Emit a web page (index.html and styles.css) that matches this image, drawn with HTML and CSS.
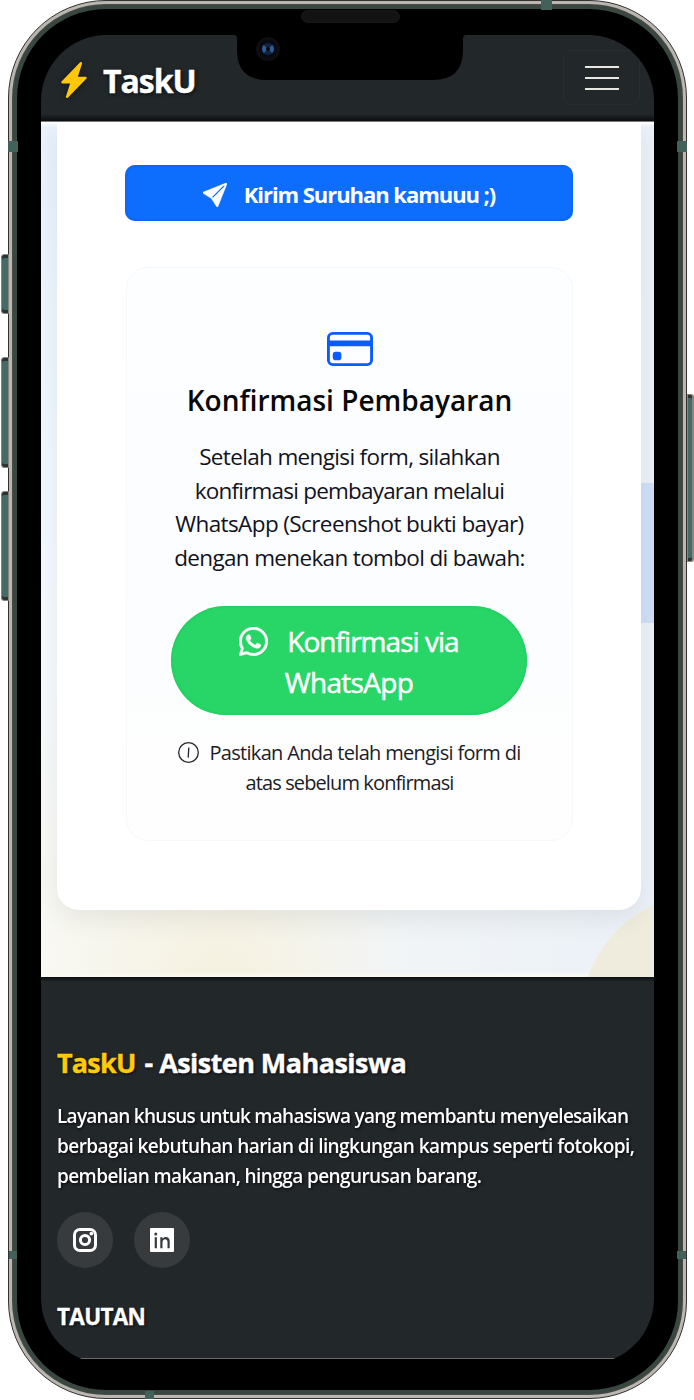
FILE: index.html
```html
<!DOCTYPE html>
<html lang="id">
<head>
<meta charset="utf-8">
<title>TaskU - Asisten Mahasiswa</title>
<link rel="stylesheet" href="styles.css">
</head>
<body>
<div class="phone">
  <i class="key key-mute"></i><i class="key key-up"></i><i class="key key-down"></i><i class="key key-power"></i>
  <div class="ring-light"><div class="ring-line"><div class="ring-green"><div class="bezel">
    <div class="screen">
      <header class="navbar">
        <div class="brand">
          <svg class="bolt" viewBox="2.4 0 11.2 16" preserveAspectRatio="none"><path d="M11.251.068a.5.5 0 0 1 .227.58L9.677 6.5H13a.5.5 0 0 1 .364.843l-8 8.5a.5.5 0 0 1-.842-.49L6.323 9.5H3a.5.5 0 0 1-.364-.843l8-8.5a.5.5 0 0 1 .615-.09z"/></svg>
          <span class="brand-name">TaskU</span>
        </div>
        <button class="toggler" aria-label="Menu"><i></i><i></i><i></i></button>
      </header>
      <main class="page">
        <i class="deco-square"></i><i class="deco-circle"></i>
        <section class="card">
          <button class="submit">
            <svg viewBox="0 0 16 16"><path d="M15.964.686a.5.5 0 0 0-.65-.65L.767 5.855H.766l-.452.18a.5.5 0 0 0-.082.887l.41.26.001.002 4.995 3.178 3.178 4.995.002.002.26.41a.5.5 0 0 0 .886-.083zm-1.833 1.89L6.637 10.07l-.215-.338a.5.5 0 0 0-.154-.154l-.338-.215 7.494-7.494 1.178-.471z"/></svg>
            <span class="submit-text">Kirim Suruhan kamuuu ;)</span>
          </button>
          <div class="confirm">
            <svg class="credit" viewBox="0 2 16 12" preserveAspectRatio="none"><path d="M0 4a2 2 0 0 1 2-2h12a2 2 0 0 1 2 2v8a2 2 0 0 1-2 2H2a2 2 0 0 1-2-2zm2-1a1 1 0 0 0-1 1v1h14V4a1 1 0 0 0-1-1zm13 4H1v5a1 1 0 0 0 1 1h12a1 1 0 0 0 1-1z"/><path d="M2 10a1 1 0 0 1 1-1h1a1 1 0 0 1 1 1v1a1 1 0 0 1-1 1H3a1 1 0 0 1-1-1z"/></svg>
            <h2 class="confirm-title">Konfirmasi Pembayaran</h2>
            <p class="confirm-text">
              <span class="t1">Setelah mengisi form, silahkan</span>
              <span class="t2">konfirmasi pembayaran melalui</span>
              <span class="t3">WhatsApp (Screenshot bukti bayar)</span>
              <span class="t4">dengan menekan tombol di bawah:</span>
            </p>
            <button class="wa">
              <span class="wa-row"><svg viewBox="0 0 16 16"><path d="M13.601 2.326A7.85 7.85 0 0 0 7.994 0C3.627 0 .068 3.558.064 7.926c0 1.399.366 2.76 1.057 3.965L0 16l4.204-1.102a7.9 7.9 0 0 0 3.79.965h.004c4.368 0 7.926-3.558 7.93-7.93A7.9 7.9 0 0 0 13.6 2.326zM7.994 14.521a6.6 6.6 0 0 1-3.356-.92l-.24-.144-2.494.654.666-2.433-.156-.251a6.56 6.56 0 0 1-1.007-3.505c0-3.626 2.957-6.584 6.591-6.584a6.56 6.56 0 0 1 4.66 1.931 6.56 6.56 0 0 1 1.928 4.66c-.004 3.639-2.961 6.592-6.592 6.592"/><path d="M11.61 9.585c-.197-.099-1.17-.578-1.353-.646-.182-.065-.315-.099-.445.099-.133.197-.513.646-.627.775-.114.133-.232.148-.43.05-.197-.1-.836-.308-1.592-.985-.59-.525-.985-1.175-1.103-1.372-.114-.198-.011-.304.088-.403.087-.088.197-.232.296-.346.1-.114.133-.198.198-.33.065-.134.034-.248-.015-.347-.05-.099-.445-1.076-.612-1.47-.16-.389-.323-.335-.445-.34-.114-.007-.247-.007-.38-.007a.73.73 0 0 0-.529.247c-.182.198-.691.677-.691 1.654s.71 1.916.81 2.049c.098.133 1.394 2.132 3.383 2.992.47.205.84.326 1.129.418.475.152.904.129 1.246.08.38-.058 1.171-.48 1.338-.943.164-.464.164-.86.114-.943-.049-.084-.182-.133-.38-.232"/></svg><span class="w1">Konfirmasi via</span></span>
              <span class="w2">WhatsApp</span>
            </button>
            <p class="note">
              <span class="note-row"><svg viewBox="0 0 21 21"><circle cx="10.5" cy="10.5" r="9.8"/><path d="M10.8 5.5 10.2 15.6"/></svg><span class="n1">Pastikan Anda telah mengisi form di</span></span>
              <span class="n2">atas sebelum konfirmasi</span>
            </p>
          </div>
        </section>
      </main>
      <footer class="footer">
        <h3 class="footer-title"><b>TaskU</b><span>- Asisten Mahasiswa</span></h3>
        <p class="footer-text">
          <span class="p1">Layanan khusus untuk mahasiswa yang membantu menyelesaikan</span>
          <span class="p2">berbagai kebutuhan harian di lingkungan kampus seperti fotokopi,</span>
          <span class="p3">pembelian makanan, hingga pengurusan barang.</span>
        </p>
        <div class="social">
          <a><svg viewBox="0 0 24 24"><path fill-rule="evenodd" d="M7 0h10a7 7 0 0 1 7 7v10a7 7 0 0 1-7 7H7a7 7 0 0 1-7-7V7a7 7 0 0 1 7-7zm0 3A4 4 0 0 0 3 7v10a4 4 0 0 0 4 4h10a4 4 0 0 0 4-4V7a4 4 0 0 0-4-4z"/><circle class="lens" cx="12" cy="12" r="4.600"/><circle cx="18.400" cy="5.600" r="1.900"/></svg></a>
          <a><svg viewBox="0 0 24 24"><path fill-rule="evenodd" d="M1 0h22a1 1 0 0 1 1 1v22a1 1 0 0 1-1 1H1a1 1 0 0 1-1-1V1a1 1 0 0 1 1-1zM4.700 9.200v11h2.200v-11zM5.750 4.600a1.500 1.500 0 1 0 0 3 1.500 1.500 0 0 0 0-3zM10.300 9.200v11h2.200v-6c0-4 5-4 5-.4v6.400h2.200v-7c0-5-5.200-5.200-7.200-2.500V9.200z"/></svg></a>
        </div>
        <h4 class="links-title">TAUTAN</h4>
      </footer>
    </div>
  </div></div></div></div>
  <svg class="notch" viewBox="0 0 232 46"><path d="M0 0Q3 0 3 4V15Q3 45 33 45H199Q229 45 229 15V4Q229 0 232 0Z"/></svg>
  <i class="camera"><i></i></i><i class="speaker"></i>
  <i class="band band-t"></i><i class="band band-l1"></i><i class="band band-r1"></i><i class="band band-l2"></i><i class="band band-r2"></i><i class="band band-b"></i>
</div>
</body>
</html>
```
FILE: styles.css
```css
* { box-sizing: border-box; }
body { margin: 0; background: #fff; font-family: "Open Sans", "Noto Sans", sans-serif; }
h2, h3, h4, p { margin: 0; }
button { border: 0; padding: 0; font-family: inherit; }
span, b, h2 { white-space: nowrap; }

/* device frame */
.phone { position: relative; width: 694px; height: 1400px; padding: 0 7px 1px 8px; }
.ring-light { height: 100%; padding: 3px; border: 1px solid #33312f; border-radius: 98px; background: #b9b7b0; }
.ring-line { height: 100%; padding: 1px; border-radius: 94px; background: #4b4a47; }
.ring-green { height: 100%; padding: 4px; border-radius: 93px; background: #38473f; }
.bezel { height: 100%; padding: 26px 23px 32px 24px; border-radius: 89px; background: #000; }
.screen { display: flex; flex-direction: column; width: 613px; height: 1329px; border-radius: 66px; overflow: hidden; background: #000; }

.key { position: absolute; width: 8px; left: 1px; border: 1px solid #87877e; border-radius: 3px 0 0 3px; background: #466a65; box-shadow: inset 0 3px #2d3330, inset 0 -3px #2d3330; }
.key-mute { top: 254px; height: 60px; }
.key-up { top: 357px; height: 111px; }
.key-down { top: 491px; height: 110px; }
.key-power { left: 687px; width: 7px; top: 394px; height: 168px; border-width: 1px 2px 1px 1px; border-radius: 0 3px 3px 0; }
.band { position: absolute; background: #42615b; }
.band-t { left: 541px; top: 0; width: 11px; height: 10px; }
.band-l1 { left: 8px; top: 141px; width: 10px; height: 11px; }
.band-r1 { left: 677px; top: 141px; width: 10px; height: 11px; }
.band-l2 { left: 9px; top: 1251px; width: 8px; height: 8px; }
.band-r2 { left: 677px; top: 1251px; width: 9px; height: 8px; }
.band-b { left: 145px; top: 1391px; width: 9px; height: 8px; }
.notch { position: absolute; left: 234px; top: 34.500px; width: 232px; height: 46px; fill: #000; }
.camera { position: absolute; left: 256px; top: 37px; width: 24px; height: 24px; border: 3px solid #0e0e10; border-radius: 50%; background: #050a14; }
.camera i { position: absolute; left: 3px; top: 3px; width: 12px; height: 12px; border-radius: 50%; border: 4px solid #2d5c94; border-top-color: #12233f; border-bottom-color: #12233f; background: #05070c; filter: blur(.7px); }
.speaker { position: absolute; left: 301px; top: 10px; width: 99px; height: 13px; border: 1px solid #181818; border-radius: 7px; background: #131313; }

/* top bar */
.navbar { display: flex; flex: none; justify-content: space-between; height: 87px; padding: 15px 14px 0 20px; border-bottom: 1px solid #77797b; background: linear-gradient(#22272a 0, #22272a 79px, #0b0d0f 86px); }
.brand { display: flex; height: 60px; gap: 16px; align-items: center; }
.bolt { width: 26px; height: 36px; fill: #ffc60a; filter: drop-shadow(0 0 3px #10142c); }
.brand-name { font-size: 32px; font-weight: 700; letter-spacing: -1px; color: #fff; -webkit-text-stroke: .4px #fff; text-shadow: 1px 1px 4px #0a0c10; }
.toggler { display: flex; flex-direction: column; align-items: center; justify-content: center; gap: 9px; width: 77px; height: 55px; border: 1px solid #2a2d30; border-radius: 8px; background: none; }
.toggler i { width: 34px; height: 2px; background: #e8e6e0; }

/* content */
.page { position: relative; flex: none; height: 855px; padding: 0 13px 67px 16px; overflow: hidden; background: linear-gradient(#fff, #fff0 5px), linear-gradient(#fff0 850px, #fcfbf0 855px), radial-gradient(circle at 180px 860px, #f6f1df 0, #f6f1df00 180px), linear-gradient(90deg, #ebf1f800 0, #ebf1f8 100%), linear-gradient(#e8f1fc 0, #f0f8fe 300px, #f5fafe 560px, #f8f8f2 760px, #f9f9f4 100%); }
.deco-square { position: absolute; left: 560px; top: 361px; width: 60px; height: 140px; background: #cfdff8; }
.deco-circle { position: absolute; left: 541px; top: 773px; width: 240px; height: 240px; border-radius: 50%; background: #f0ecdd; }
.card { position: relative; display: flex; flex-direction: column; height: 788px; padding: 43px 68px 68px; gap: 46px; border-radius: 0 0 22px 22px; background: #fff; box-shadow: 0 10px 26px #00000012; }
.submit { display: flex; align-items: center; justify-content: center; gap: 17px; height: 56px; border-radius: 10px; background: #0d6dfd; box-shadow: inset 0 0 3px #0059ee; color: #fff; }
.submit svg { width: 24px; height: 24px; margin-top: 4px; fill: #fff; stroke: #fff; stroke-width: .3; }
.submit-text { padding-top: 2px; font-size: 22px; font-weight: 700; letter-spacing: -1.050px; }
.confirm { display: flex; flex-direction: column; align-items: center; width: 447px; height: 574px; margin-left: 1px; padding: 64px 45px 0; border: 1px solid #f6f8f9; border-radius: 22px; background: linear-gradient(#fdfeff, #fcfdff 50%, #fefefe); text-align: center; }
.credit { width: 46px; height: 34px; fill: #0a5cff; }
.confirm-title { margin-top: 14px; font-size: 28px; line-height: 40px; font-weight: 600; color: #080808; }
.confirm-text { display: flex; flex-direction: column; align-items: center; margin-top: 20px; font-size: 22.500px; line-height: 33.700px; color: #12121c; }
.t1 { letter-spacing: -.650px; }
.t2 { letter-spacing: -.800px; }
.t3 { letter-spacing: -.600px; }
.t4 { letter-spacing: -.650px; }
.wa { display: flex; flex-direction: column; align-items: center; flex: none; width: 356px; height: 109px; margin: 31px 1px 0 0; padding-top: 15px; border-radius: 55px; background: #28d567; box-shadow: inset 0 0 3px #0cc850; color: #fff; font-size: 28px; line-height: 41px; -webkit-text-stroke: .5px #fff; }
.wa-row { display: flex; align-items: center; gap: 19px; height: 41px; }
.wa-row svg { width: 29px; height: 29px; fill: #fff; stroke: #fff; stroke-width: .25; }
.w1 { letter-spacing: -.960px; }
.w2 { letter-spacing: -.700px; }
.note { display: flex; flex-direction: column; align-items: center; margin-top: 23px; font-size: 20px; line-height: 30px; color: #1c1c26; }
.note-row { display: flex; align-items: center; gap: 10px; }
.note-row svg { width: 21px; height: 21px; fill: none; stroke: #24242c; stroke-width: 1.300; }
.n1 { letter-spacing: -.680px; }
.n2 { letter-spacing: -.880px; }

/* footer */
.footer { flex: none; height: 382px; padding: 66px 17px 0 16px; border-bottom: 1px solid #686a6b; background: linear-gradient(#0c1014, #22272a 5px); color: #fff; text-shadow: 1px 1px 3px #08080c; }
.footer-title { display: flex; gap: 9px; font-size: 27px; line-height: 40px; font-weight: 700; letter-spacing: -.550px; -webkit-text-stroke: .4px; }
.footer-title b { color: #ffca08; font-weight: 700; letter-spacing: -.800px; }
.footer-text { display: flex; flex-direction: column; align-items: flex-start; margin-top: 17px; font-size: 20.500px; line-height: 30px; font-weight: 600; transform: scaleX(.93); transform-origin: left; }
.p1 { letter-spacing: -.824px; }
.p2 { letter-spacing: -.648px; }
.p3 { letter-spacing: -.663px; }
.social { display: flex; gap: 21px; margin-top: 22px; }
.social a { display: grid; place-items: center; width: 56px; height: 56px; border-radius: 50%; background: #373b3e; }
.social svg { width: 24px; height: 24px; fill: #fff; }
.social .lens { fill: none; stroke: #fff; stroke-width: 3; }
.links-title { margin-top: 32px; font-size: 22.500px; line-height: 34px; font-weight: 700; letter-spacing: -.700px; -webkit-text-stroke: .3px; }
```
